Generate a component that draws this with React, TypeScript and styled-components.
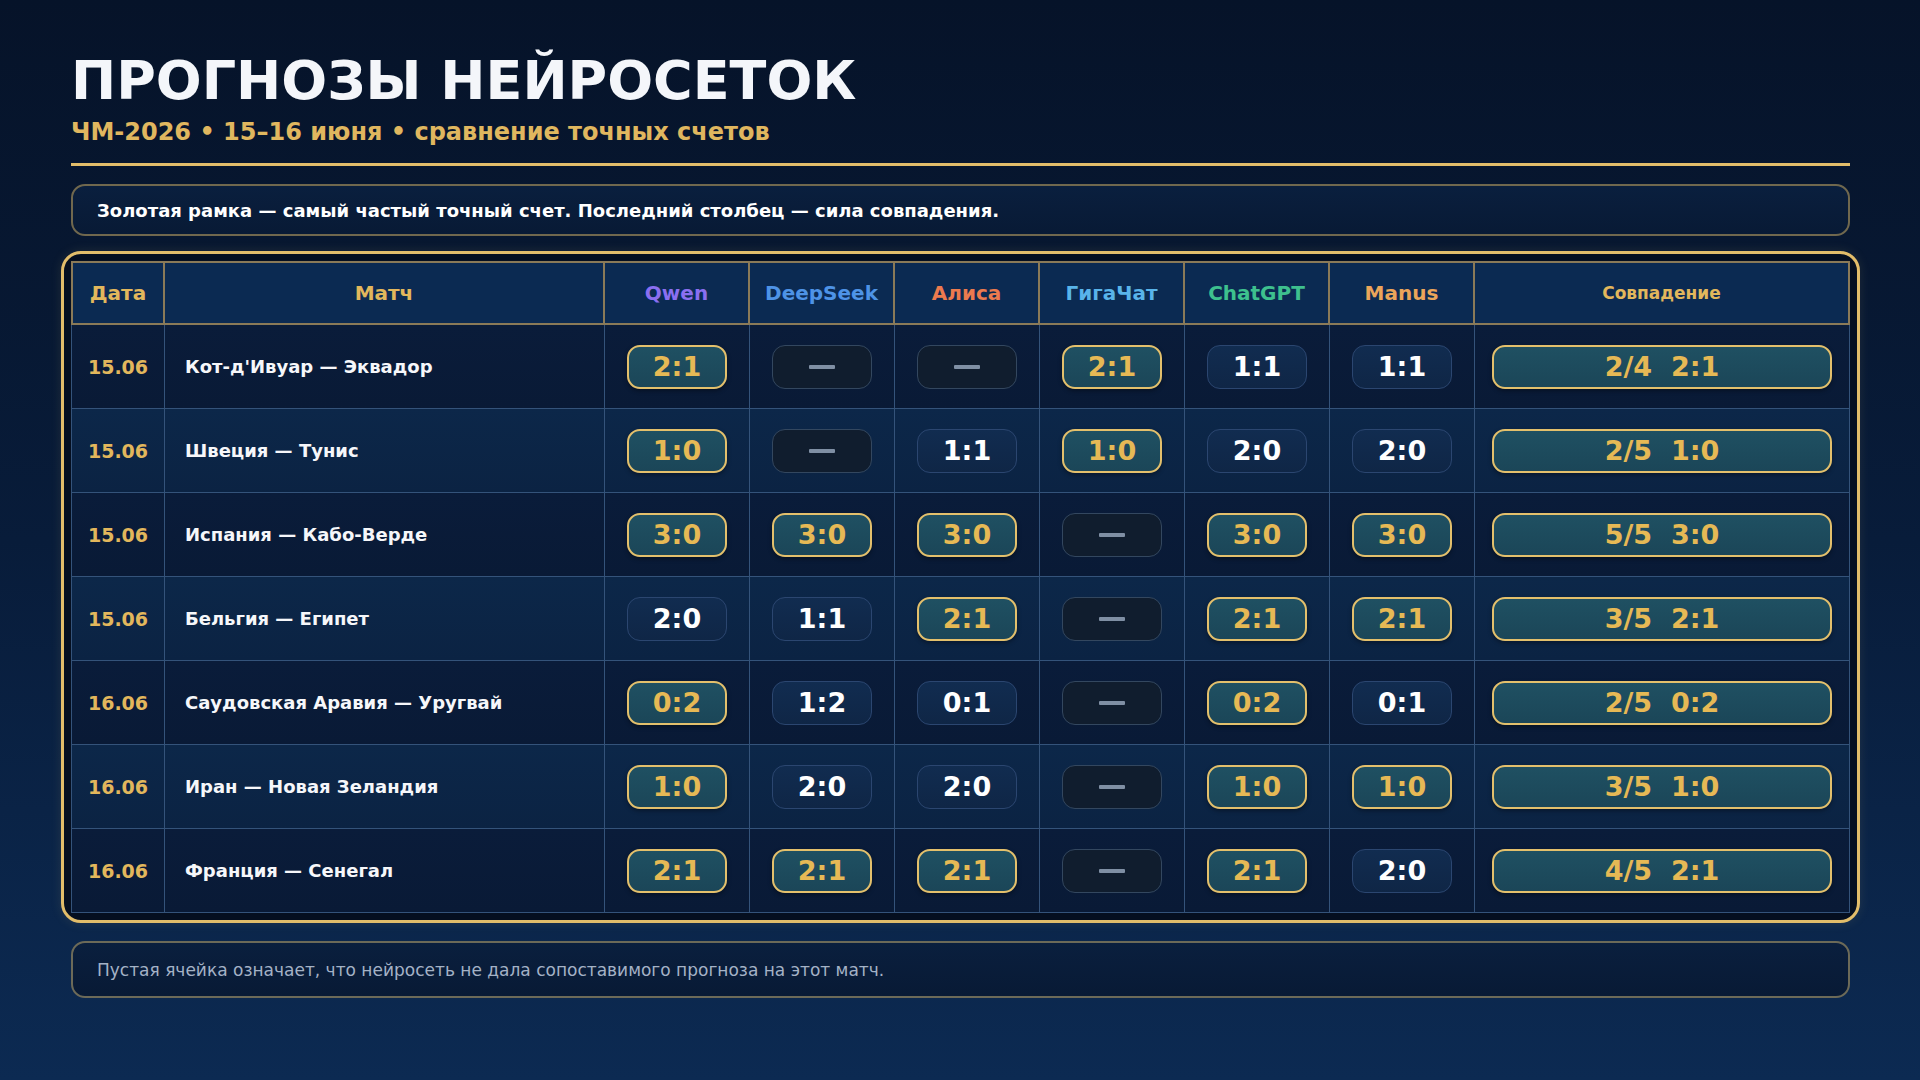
import React from "react";
import styled, { createGlobalStyle, css } from "styled-components";

const Global = createGlobalStyle`
  html, body { margin: 0; padding: 0; }
  body {
    width: 1920px;
    height: 1080px;
    overflow: hidden;
    font-family: "DejaVu Sans", "Noto Sans", sans-serif;
    background: linear-gradient(180deg, #061329 0%, #081c3a 50%, #0c2a52 100%);
  }
`;

const Page = styled.div`
  box-sizing: border-box;
  width: 1920px;
  height: 1080px;
  padding: 54px 70px 0 71px;
  display: flex;
  flex-direction: column;
`;

const Title = styled.h1`
  margin: 0;
  font-size: 54px;
  line-height: 1;
  font-weight: 700;
  color: #f4f6fa;
`;

const Subtitle = styled.div`
  margin-top: 12px;
  font-size: 24px;
  line-height: 1;
  font-weight: 700;
  color: #e0b75f;
`;

const Rule = styled.div`
  margin-top: 19px;
  height: 3px;
  background: #e2bd6a;
`;

const NoteBox = styled.div<{ $muted?: boolean }>`
  box-sizing: border-box;
  display: flex;
  align-items: center;
  padding: 0 24px;
  border: 2px solid #70684e;
  border-radius: 14px;
  background: linear-gradient(180deg, #0a1f3e 0%, #081a35 100%);
  color: #ffffff;
  font-weight: 700;
  font-size: 18px;
  ${(p) =>
    p.$muted
      ? css`
          margin-top: 18px;
          height: 57px;
          font-weight: 400;
          font-size: 17px;
          color: #a4b2c6;
          border-color: #6c6a58;
        `
      : css`
          margin-top: 18px;
          height: 52px;
        `}
`;

const Frame = styled.div`
  box-sizing: border-box;
  margin: 15px -10px 0 -10px;
  padding: 7px;
  border: 3px solid #e2bd6a;
  border-radius: 20px;
  background: #050f20;
  box-shadow: 0 0 12px rgba(226, 189, 106, 0.12);
`;

const Grid = styled.div`
  display: grid;
  grid-template-columns: 94px 440px repeat(6, 145px) 1fr;
`;

const HeadCell = styled.div<{ $color: string; $small?: boolean; $first?: boolean }>`
  box-sizing: border-box;
  height: 64px;
  display: flex;
  align-items: center;
  justify-content: center;
  background: #0b2a52;
  border-top: 2px solid #8a7a58;
  border-bottom: 2px solid #8a7a58;
  border-right: 2px solid #8a7a58;
  ${(p) => p.$first && css`border-left: 2px solid #8a7a58;`}
  color: ${(p) => p.$color};
  font-weight: 700;
  font-size: ${(p) => (p.$small ? "17px" : "20px")};
`;

const Cell = styled.div<{ $alt: boolean; $align?: string; $first?: boolean }>`
  box-sizing: border-box;
  height: 84px;
  display: flex;
  align-items: center;
  justify-content: ${(p) => p.$align || "center"};
  padding: ${(p) => (p.$align === "flex-start" ? "0 0 0 20px" : "0")};
  background: ${(p) =>
    p.$alt
      ? "linear-gradient(180deg, #0c2749 0%, #0b2343 100%)"
      : "linear-gradient(180deg, #0a1c3a 0%, #091a36 100%)"};
  border-right: 1px solid #34537a;
  border-bottom: 1px solid #34537a;
  ${(p) => p.$first && css`border-left: 1px solid #34537a;`}
`;

const DateText = styled.span`
  color: #e2b75c;
  font-weight: 700;
  font-size: 19px;
`;

const MatchText = styled.span`
  color: #f6f7fa;
  font-weight: 700;
  font-size: 18px;
`;

type Kind = "gold" | "plain" | "empty";

const Pill = styled.div<{ $kind: Kind; $wide?: boolean }>`
  box-sizing: border-box;
  width: ${(p) => (p.$wide ? "340px" : "100px")};
  height: 44px;
  border-radius: 13px;
  display: flex;
  align-items: center;
  justify-content: center;
  font-weight: 700;
  font-size: 27px;
  white-space: pre;
  ${(p) =>
    p.$kind === "gold"
      ? css`
          background: linear-gradient(180deg, #1f5062 0%, #1b4658 100%);
          border: 2px solid #e3c06c;
          color: #e6b955;
          box-shadow: 0 2px 4px rgba(0, 0, 0, 0.35);
        `
      : p.$kind === "plain"
      ? css`
          background: linear-gradient(180deg, #112c50 0%, #0f2646 100%);
          border: 1px solid #2b4670;
          color: #ffffff;
        `
      : css`
          background: #101d2e;
          border: 1px solid #33475f;
          color: #7d8da2;
        `}
`;

const Dash = styled.span`
  display: block;
  width: 26px;
  height: 4px;
  border-radius: 1px;
  background: #7f8fa4;
`;

const models = [
  { name: "Qwen", color: "#8a6ff0" },
  { name: "DeepSeek", color: "#4e93e6" },
  { name: "Алиса", color: "#ec7a4e" },
  { name: "ГигаЧат", color: "#59b4ea" },
  { name: "ChatGPT", color: "#3ec08e" },
  { name: "Manus", color: "#eba55a" },
];

type Row = { date: string; match: string; picks: (string | null)[]; gold: boolean[]; total: string };

const rows: Row[] = [
  { date: "15.06", match: "Кот-д'Ивуар — Эквадор", picks: ["2:1", null, null, "2:1", "1:1", "1:1"], gold: [true, false, false, true, false, false], total: "2/4  2:1" },
  { date: "15.06", match: "Швеция — Тунис", picks: ["1:0", null, "1:1", "1:0", "2:0", "2:0"], gold: [true, false, false, true, false, false], total: "2/5  1:0" },
  { date: "15.06", match: "Испания — Кабо-Верде", picks: ["3:0", "3:0", "3:0", null, "3:0", "3:0"], gold: [true, true, true, false, true, true], total: "5/5  3:0" },
  { date: "15.06", match: "Бельгия — Египет", picks: ["2:0", "1:1", "2:1", null, "2:1", "2:1"], gold: [false, false, true, false, true, true], total: "3/5  2:1" },
  { date: "16.06", match: "Саудовская Аравия — Уругвай", picks: ["0:2", "1:2", "0:1", null, "0:2", "0:1"], gold: [true, false, false, false, true, false], total: "2/5  0:2" },
  { date: "16.06", match: "Иран — Новая Зеландия", picks: ["1:0", "2:0", "2:0", null, "1:0", "1:0"], gold: [true, false, false, false, true, true], total: "3/5  1:0" },
  { date: "16.06", match: "Франция — Сенегал", picks: ["2:1", "2:1", "2:1", null, "2:1", "2:0"], gold: [true, true, true, false, true, false], total: "4/5  2:1" },
];

export default function App() {
  return (
    <>
      <Global />
      <Page>
        <Title>ПРОГНОЗЫ НЕЙРОСЕТОК</Title>
        <Subtitle>ЧМ-2026 • 15–16 июня • сравнение точных счетов</Subtitle>
        <Rule />
        <NoteBox>Золотая рамка — самый частый точный счет. Последний столбец — сила совпадения.</NoteBox>
        <Frame>
          <Grid>
            <HeadCell $color="#e2b75c" $first>Дата</HeadCell>
            <HeadCell $color="#e2b75c">Матч</HeadCell>
            {models.map((m) => (
              <HeadCell key={m.name} $color={m.color}>
                {m.name}
              </HeadCell>
            ))}
            <HeadCell $color="#e2b75c" $small>
              Совпадение
            </HeadCell>
            {rows.map((r, i) => {
              const alt = i % 2 === 1;
              return (
                <React.Fragment key={i}>
                  <Cell $alt={alt} $first>
                    <DateText>{r.date}</DateText>
                  </Cell>
                  <Cell $alt={alt} $align="flex-start">
                    <MatchText>{r.match}</MatchText>
                  </Cell>
                  {r.picks.map((p, j) => (
                    <Cell $alt={alt} key={j}>
                      {p === null ? (
                        <Pill $kind="empty">
                          <Dash aria-label="—" />
                        </Pill>
                      ) : (
                        <Pill $kind={r.gold[j] ? "gold" : "plain"}>{p}</Pill>
                      )}
                    </Cell>
                  ))}
                  <Cell $alt={alt}>
                    <Pill $kind="gold" $wide>
                      {r.total}
                    </Pill>
                  </Cell>
                </React.Fragment>
              );
            })}
          </Grid>
        </Frame>
        <NoteBox $muted>Пустая ячейка означает, что нейросеть не дала сопоставимого прогноза на этот матч.</NoteBox>
      </Page>
    </>
  );
}
